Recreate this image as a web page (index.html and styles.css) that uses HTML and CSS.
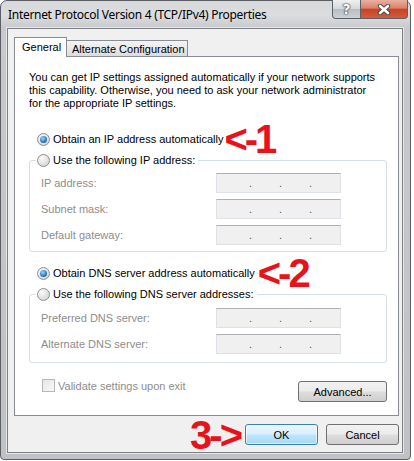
FILE: index.html
```html
<!DOCTYPE html>
<html lang="en">
<head>
    <meta charset="UTF-8">
    <title>Internet Protocol Version 4 (TCP/IPv4) Properties</title>
    <link rel="stylesheet" href="styles.css">
</head>
<body>
<div class="window">
    <div class="titlebar">
        <span class="title">Internet Protocol Version 4 (TCP/IPv4) Properties</span>
        <div class="caption">
            <span class="cap-btn help">?</span>
            <span class="cap-btn close">
                <svg width="14" height="11" viewBox="0 0 14 11">
                    <path d="M3 2 L11 9 M11 2 L3 9" stroke="#4a4a4a" stroke-width="4.4" stroke-linecap="round"/>
                    <path d="M3 2 L11 9 M11 2 L3 9" stroke="#fff" stroke-width="2.6" stroke-linecap="round"/>
                </svg>
            </span>
        </div>
    </div>

    <div class="client">
        <div class="tabs">
            <span class="tab active">General</span>
            <span class="tab">Alternate Configuration</span>
        </div>

        <div class="panel">
            <p class="intro">You can get IP settings assigned automatically if your network supports<br>this capability. Otherwise, you need to ask your network administrator<br>for the appropriate IP settings.</p>

            <div class="opt first"><span class="radio on"></span>Obtain an IP address automatically<span class="mark">&lt;-1</span></div>

            <fieldset class="group">
                <legend class="opt"><span class="radio"></span>Use the following IP address:</legend>
                <div class="field"><span class="lbl">IP address:</span><span class="ipbox"><i>.</i><i>.</i><i>.</i></span></div>
                <div class="field"><span class="lbl">Subnet mask:</span><span class="ipbox"><i>.</i><i>.</i><i>.</i></span></div>
                <div class="field"><span class="lbl">Default gateway:</span><span class="ipbox"><i>.</i><i>.</i><i>.</i></span></div>
            </fieldset>

            <div class="opt dns"><span class="radio on"></span>Obtain DNS server address automatically<span class="mark two">&lt;-2</span></div>

            <fieldset class="group dns-group">
                <legend class="opt"><span class="radio"></span>Use the following DNS server addresses:</legend>
                <div class="field"><span class="lbl">Preferred DNS server:</span><span class="ipbox"><i>.</i><i>.</i><i>.</i></span></div>
                <div class="field"><span class="lbl">Alternate DNS server:</span><span class="ipbox"><i>.</i><i>.</i><i>.</i></span></div>
            </fieldset>

            <div class="bottom">
                <span class="check"><span class="box"></span>Validate settings upon exit</span>
                <span class="btn adv">Advanced...</span>
            </div>
        </div>

        <div class="buttons">
            <span class="mark three">3-&gt;</span>
            <span class="btn default">OK</span>
            <span class="btn">Cancel</span>
        </div>
    </div>
</div>
</body>
</html>
```

FILE: styles.css
```css
body {
    margin: 0;
    background: #fff;
    font: 11px "Liberation Sans", Arial, sans-serif;
    color: #000;
}

.window {
    width: 411px;
    height: 460px;
    box-sizing: border-box;
    border: 1px solid #5b5e62;
    border-radius: 7px 7px 4px 4px;
    background: linear-gradient(#d6d8da, #dcdddf 14px, #c7c9cc 27px, #bfc1c4);
    display: flex;
    flex-direction: column;
}

/* title bar */
.titlebar {
    height: 27px;
    display: flex;
}
.title {
    padding: 6px 0 0 7px;
    font: 12px/16px "Noto Sans", "Open Sans", sans-serif;
    letter-spacing: -0.3px;
}
.caption {
    margin: -1px 2px 0 auto;
    display: flex;
    height: 19px;
}
.cap-btn {
    height: 19px;
    box-sizing: border-box;
    display: flex;
    align-items: center;
    justify-content: center;
    border: 1px solid #5c6168;
    border-top: 0;
}
.help {
    width: 29px;
    border-radius: 0 0 0 4px;
    background: linear-gradient(#eef0f2, #d3d7db 50%, #b9bec4 51%, #cdd1d5);
    color: #fff;
    font: bold 14px "DejaVu Sans", sans-serif;
    text-shadow: 0 0 1px #333, 0 0 1px #333, 0 0 2px #555;
}
.close {
    width: 47px;
    border-left: 0;
    border-radius: 0 0 4px 0;
    background: linear-gradient(#eab0a2, #dc8269 45%, #c8432a 52%, #d25c3a);
}

/* client area */
.client {
    margin-left: 6px;
    width: 396px;
    height: 425px;
    box-sizing: border-box;
    border: 1px solid #7d8186;
    box-shadow: 0 0 0 1px #e4e6e8;
    background: #f0f0f0;
    padding: 8px 3px 0 6px;
}

.tabs {
    display: flex;
    align-items: flex-end;
    height: 19px;
}
.tab {
    height: 16px;
    width: 122px;
    margin-left: -1px;
    box-sizing: border-box;
    border: 1px solid #898c95;
    border-bottom: 0;
    padding-left: 5px;
    line-height: 16px;
    white-space: nowrap;
    background: linear-gradient(#f4f4f4, #e9e9e9 50%, #dcdcdc);
}
.tab.active {
    width: 53px;
    height: 20px;
    margin: 0 0 -1px 0;
    padding-left: 7px;
    line-height: 18px;
    background: #fff;
    position: relative;
    z-index: 1;
}

.panel {
    width: 385px;
    height: 360px;
    box-sizing: border-box;
    border: 1px solid #898c95;
    background: #fff;
}

.intro {
    margin: 14px 0 0 14px;
    line-height: 13px;
    white-space: nowrap;
}

.opt {
    display: flex;
    align-items: center;
    height: 16px;
    white-space: nowrap;
}
.opt.first {
    margin: 21px 0 0 22px;
}
.opt.dns {
    margin: 13px 0 0 22px;
}

.radio {
    flex: none;
    width: 13px;
    height: 13px;
    box-sizing: border-box;
    border-radius: 50%;
    border: 1px solid #8d8f92;
    background: radial-gradient(circle at 35% 30%, #fbfbfb, #e2e2e2 55%, #c9c9c9);
    margin-right: 3px;
    display: grid;
    place-items: center;
}
.radio.on::after {
    content: "";
    width: 7px;
    height: 7px;
    border-radius: 50%;
    background: radial-gradient(circle at 40% 35%, #9fd8f6, #2c82c6 55%, #16467f);
}

.group {
    margin: 5px 0 0 14px;
    width: 358px;
    box-sizing: border-box;
    border: 1px solid #d5dfe5;
    border-radius: 3px;
    padding: 0 0 6px 0;
}
.group legend {
    margin-left: 6px;
    padding: 0 3px 0 1px;
}
.dns-group {
    padding-bottom: 8px;
}

.field {
    display: flex;
    align-items: center;
    height: 20px;
    margin: 6px 0 0 11px;
}
.group legend + .field {
    margin-top: 5px;
}
.dns-group legend + .field {
    margin-top: 6px;
}
.lbl {
    width: 175px;
    color: #8d8d8d;
}
.ipbox {
    width: 125px;
    height: 20px;
    box-sizing: border-box;
    border: 1px solid #dde2e8;
    border-top-color: #adb0b5;
    background: #f0f0f0;
    display: flex;
    padding-left: 32px;
}
.ipbox i {
    font-style: normal;
    width: 30px;
    line-height: 18px;
    color: #555;
}

.bottom {
    display: flex;
    justify-content: space-between;
    align-items: flex-start;
    margin-top: 16px;
}
.check {
    display: flex;
    align-items: center;
    height: 13px;
    margin-left: 27px;
    color: #8d8d8d;
}
.box {
    width: 13px;
    height: 13px;
    box-sizing: border-box;
    border: 1px solid #b5b7ba;
    background: linear-gradient(135deg, #e6e6e6, #f8f8f8);
    margin-right: 3px;
}

.btn {
    width: 73px;
    height: 21px;
    box-sizing: border-box;
    border: 1px solid #707070;
    border-radius: 3px;
    background: linear-gradient(#f2f2f2, #ebebeb 48%, #dddddd 52%, #cfcfcf);
    display: flex;
    align-items: center;
    justify-content: center;
}
.btn.adv {
    width: 89px;
    margin: 2px 11px 0 0;
}
.btn.default {
    border-color: #3c7fb1;
    background: linear-gradient(#eaf6fd, #d9f0fc 48%, #bee6fd 52%, #a7d9f5);
    box-shadow: inset 0 0 0 1px rgba(255, 255, 255, 0.6);
}

.buttons {
    display: flex;
    justify-content: flex-end;
    align-items: center;
    gap: 8px;
    margin-top: 8px;
}

/* red annotations */
.mark {
    color: #e8121a;
    font: bold 40px/16px "Liberation Sans", Arial, sans-serif;
    letter-spacing: -3px;
    margin-left: 1px;
}
.mark.two {
    margin-left: 3px;
}
.mark.three {
    margin: 0 -3px 0 0;
}
```
